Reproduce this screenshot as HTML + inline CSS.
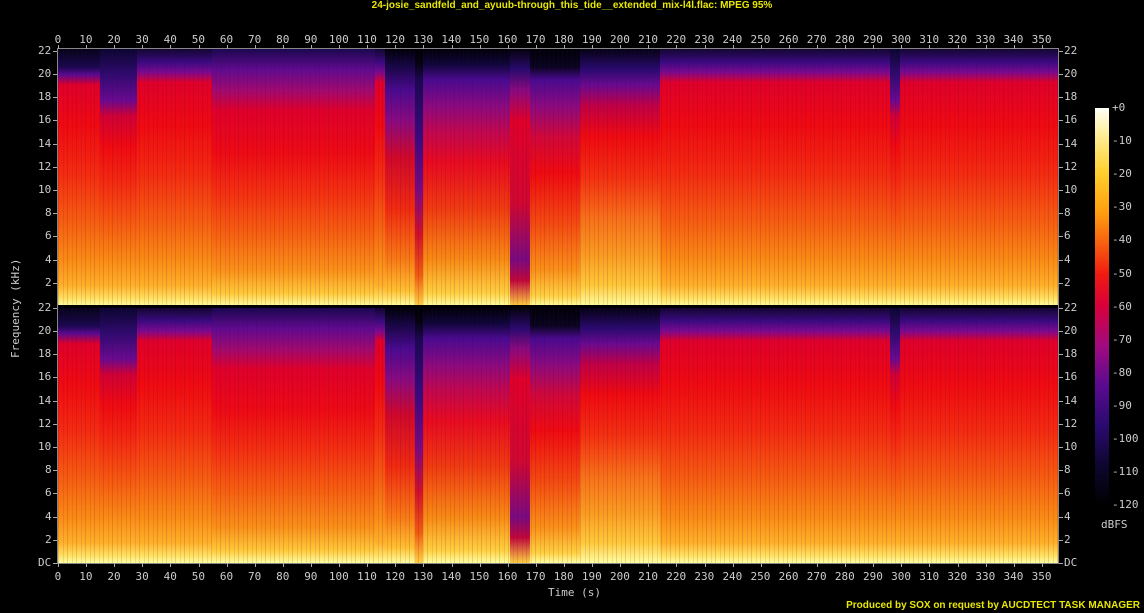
<!DOCTYPE html>
<html><head><meta charset="utf-8"><style>
body{margin:0;background:#000;width:1144px;height:613px;overflow:hidden;position:relative;font-family:"DejaVu Sans Mono","Liberation Mono",monospace;color:#ccc}
.t{position:absolute;font-size:11px;line-height:12px}
.title{position:absolute;left:0;width:1144px;text-align:center;color:#e8e800;font:bold 10px "Liberation Sans",sans-serif;top:0px}
.panel{position:absolute;left:58px;width:1000px;display:flex;overflow:hidden}
.panel>div{height:100%}
.panel:after{content:"";position:absolute;inset:0;background:repeating-linear-gradient(90deg,rgba(60,0,60,.14) 0 1px,transparent 1px 5px,rgba(80,0,80,.1) 5px 6px,transparent 6px 9px)}
.g1{background:linear-gradient(#120630 0%,#3a0a80 5%,#7a0a90 9%,#e0002a 13%,#f00a10 30%,#f42a10 48%,#f65a10 66%,#fa8a14 82%,#ffb028 92%,#ffe060 97%,#ffffa0 100%)}
.g0{background:linear-gradient(#060418 0%,#1a0850 7%,#5a0a90 10%,#e0002a 14%,#f00a10 30%,#f42a10 48%,#f65a10 66%,#fa8a14 82%,#ffb028 92%,#ffe060 97%,#ffffa0 100%)}
.g2{background:linear-gradient(#0a0630 0%,#300a70 10%,#6a0a90 20%,#d00035 26%,#f00a10 38%,#f42a10 52%,#f65a10 68%,#fa8a14 82%,#ffb028 92%,#ffe060 97%,#ffffa0 100%)}
.g3{background:linear-gradient(#1a0850 0%,#600a90 8%,#a00a70 16%,#e0002a 24%,#ee0a14 40%,#f43010 56%,#f66010 72%,#fa9018 86%,#ffc838 95%,#ffffa0 100%)}
.g4{background:linear-gradient(#000008 0%,#140640 6%,#4a0a90 16%,#8a0a80 28%,#d0082a 42%,#f02a10 62%,#f87a14 82%,#ffc030 94%,#ffffa0 100%)}
.g5{background:linear-gradient(#000008 0%,#04020c 5%,#1a0850 12%,#3a0a80 35%,#7a0a80 55%,#d0102a 72%,#f05a10 88%,#ffd040 100%)}
.g6{background:linear-gradient(#000008 0%,#0a0420 7%,#4a0a90 12%,#8a0a80 22%,#d0083a 34%,#f00a10 48%,#f44a10 68%,#fa9018 86%,#ffd040 96%,#ffffa0 100%)}
.g7{background:linear-gradient(#000008 0%,#10063a 6%,#4a0a90 12%,#8a0a80 22%,#c00850 32%,#e80a20 44%,#f03a10 62%,#f88a14 82%,#ffd040 95%,#ffffa0 100%)}
.g8{background:linear-gradient(#040214 0%,#2a0a70 8%,#6a0a90 14%,#c00045 22%,#f00a10 34%,#f43010 50%,#f87018 66%,#fa9a20 80%,#ffc838 92%,#ffffa0 100%)}
.g9{background:linear-gradient(#04020c 0%,#2a0a70 8%,#8a0a80 16%,#e0002a 28%,#d00830 60%,#7a0a80 82%,#c0083a 90%,#ffd040 100%)}
.tick{position:absolute;background:#aaa}
.bar{position:absolute;left:1095px;top:108px;width:14px;height:397px;background:linear-gradient(#fffff8 0%,#fff0a0 6%,#ffd030 16%,#ffa010 26%,#f86010 34%,#f01a10 42%,#d8003c 50%,#a00a80 60%,#5a0a90 70%,#2a0a70 80%,#0e0630 90%,#000 100%)}
</style></head><body>
<div class="title">24-josie_sandfeld_and_ayuub-through_this_tide__extended_mix-l4l.flac: MPEG 95%</div>

<div style="position:absolute;left:57px;top:48px;width:1002px;height:516px;border:1px solid #888;box-sizing:border-box"></div>

<div class="panel" style="top:49px;height:257px">
<div class="g0" style="width:42px"></div><div class="g2" style="width:37px"></div><div class="g1" style="width:75px"></div><div class="g3" style="width:163px"></div><div class="g1" style="width:10px"></div><div class="g4" style="width:30px"></div><div class="g5" style="width:8px"></div><div class="g7" style="width:87px"></div><div class="g9" style="width:20px"></div><div class="g6" style="width:50px"></div><div class="g8" style="width:80px"></div><div class="g1" style="width:230px"></div><div class="g2" style="width:10px"></div><div class="g1" style="width:120px"></div><div class="g1" style="width:38px"></div>
</div>
<div class="panel" style="top:308px;height:255px">
<div class="g0" style="width:42px"></div><div class="g2" style="width:37px"></div><div class="g1" style="width:75px"></div><div class="g3" style="width:163px"></div><div class="g1" style="width:10px"></div><div class="g4" style="width:30px"></div><div class="g5" style="width:8px"></div><div class="g7" style="width:87px"></div><div class="g9" style="width:20px"></div><div class="g6" style="width:50px"></div><div class="g8" style="width:80px"></div><div class="g1" style="width:230px"></div><div class="g2" style="width:10px"></div><div class="g1" style="width:120px"></div><div class="g1" style="width:38px"></div>
</div>
<div style="position:absolute;left:58px;top:305px;width:1000px;height:3px;background:#000"></div>

<div id="ax"></div>
<div class="bar"></div>
<div class="t" style="left:10px;top:358px;transform:rotate(-90deg);transform-origin:0 0;white-space:nowrap">Frequency (kHz)</div>
<div class="t" style="left:548px;top:587px">Time (s)</div>
<div class="t" style="left:1101px;top:519px">dBFS</div>
<div style="position:absolute;right:4px;top:600px;color:#e8e800;font:bold 10px 'Liberation Sans',sans-serif">Produced by SOX on request by AUCDTECT TASK MANAGER</div>
<script>
var h='';
for(var i=0;i<=35;i++){var x=58+i*28.11;var s=''+i*10;
h+='<div class="t" style="left:'+(x-s.length*3.4)+'px;top:34px">'+s+'</div>';
h+='<div class="t" style="left:'+(x-s.length*3.4)+'px;top:571px">'+s+'</div>';
h+='<div class="tick" style="left:'+x+'px;top:45px;width:1px;height:4px"></div>';
h+='<div class="tick" style="left:'+x+'px;top:563px;width:1px;height:4px"></div>';}
function yl(top,zero,step){for(var k=0;k<=11;k++){var y=zero-k*step;var s=k==0?'DC':''+k*2;
if(k==0&&top==0){continue}
h+='<div class="t" style="left:'+(52-s.length*7)+'px;top:'+(y-6)+'px">'+s+'</div>';
h+='<div class="t" style="left:1064px;top:'+(y-6)+'px">'+s+'</div>';
h+='<div class="tick" style="left:53px;top:'+y+'px;width:4px;height:1px"></div>';
h+='<div class="tick" style="left:1059px;top:'+y+'px;width:4px;height:1px"></div>';}}
yl(0,306,23.2);yl(1,563,23.2);
for(var d=0;d<=12;d++){var y=108+d*33.1;var s=d==0?'+0':'-'+d*10;
h+='<div class="t" style="left:1112px;top:'+(y-6)+'px">'+s+'</div>';}
document.getElementById('ax').innerHTML=h;
</script>
</body></html>
